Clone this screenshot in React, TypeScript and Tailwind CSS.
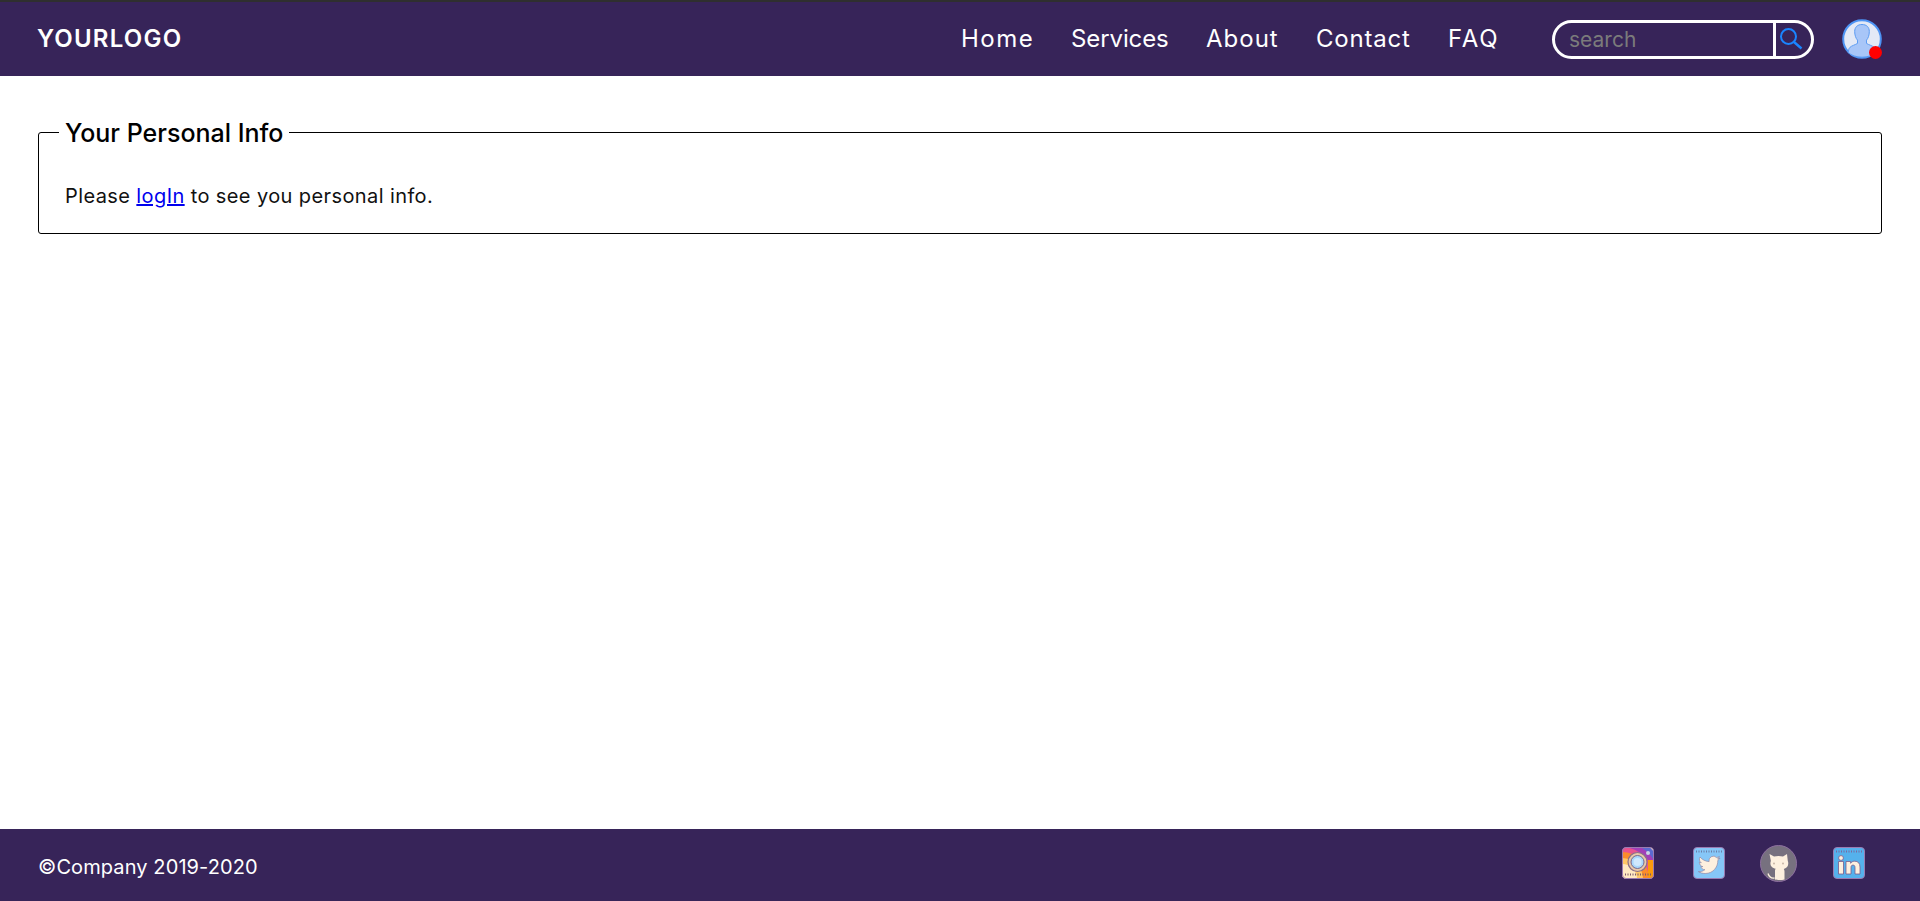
import React from 'react';

const font = 'font-["Inter","Open_Sans",sans-serif]';

const navLinks = [
  { label: 'Home', cls: 'w-[74px] tracking-[1.5px]' },
  { label: 'Services', cls: 'w-[99px] tracking-[-0.1px]' },
  { label: 'About', cls: 'w-[74px] tracking-[1px]' },
  { label: 'Contact', cls: 'w-[96px] tracking-[0.8px]' },
  { label: 'FAQ', cls: 'w-[52px] tracking-[1.8px]' },
];

const Avatar = () => (
  <div className="relative w-[40px] h-[40px]">
    <svg viewBox="0 0 40 40" className="w-[40px] h-[40px]">
      <circle cx="20" cy="20" r="18.800" fill="#e3e9f6" stroke="#4d94f5" strokeWidth="2" />
      <path
        d="M20 5.500c-4.700 0-7.300 2.800-7.300 7 0 3.500 1 6.700 2.800 8.600v3.300c-2.300 1.500-6 2.300-7.700 4.100-1 1.100-1.500 2.800-1.600 5 3 2.900 8.100 4.700 13.800 4.700s10.800-1.800 13.800-4.700c-.1-2.200-.6-3.900-1.600-5-1.700-1.800-5.400-2.600-7.700-4.100v-3.300c1.800-1.900 2.800-5.100 2.800-8.600 0-4.200-2.600-7-7.300-7z"
        fill="#a8c6f8"
        stroke="#5b9bf3"
        strokeWidth="1"
      />
    </svg>
    <span className="absolute right-0 bottom-0 w-[13px] h-[13px] rounded-full bg-[#ff0000]" />
  </div>
);

const Instagram = () => (
  <svg viewBox="0 0 32 32" className="w-[32px] h-[32px]">
    <defs>
      <clipPath id="ig">
        <rect x="0.500" y="0.500" width="31" height="31" rx="3.500" />
      </clipPath>
    </defs>
    <g clipPath="url(#ig)">
      <rect width="32" height="32" fill="#ffe9c2" />
      <circle cx="0" cy="32" r="42" fill="#5b6ad0" />
      <circle cx="0" cy="32" r="37" fill="#a23fb8" />
      <circle cx="0" cy="32" r="32" fill="#e8528f" />
      <circle cx="0" cy="32" r="27" fill="#fb8c2b" />
      <circle cx="0" cy="32" r="21" fill="#ffc766" />
      <circle cx="0" cy="32" r="15" fill="#ffe9c2" />
      <rect x="26" y="13" width="6" height="19" fill="#fb9a0c" />
    </g>
    <rect x="0.500" y="0.500" width="31" height="31" rx="3.500" fill="none" stroke="#9a7bb0" />
    <circle cx="15.500" cy="15" r="9.500" fill="#e9c9a8" stroke="#8a6f8a" strokeWidth="1.200" />
    <circle cx="15.500" cy="15" r="6.500" fill="#a9d7fb" stroke="#77688f" strokeWidth="1" />
    <circle cx="15.500" cy="15" r="4" fill="#cfe8fd" />
    <circle cx="26" cy="6" r="2" fill="#c9d4e6" />
    <path d="M3 27.500h26" stroke="#7a5a6c" strokeWidth="2" strokeDasharray="1 1.500" />
  </svg>
);

const Twitter = () => (
  <svg viewBox="0 0 32 32" className="w-[32px] h-[32px]">
    <rect x="0.500" y="0.500" width="31" height="31" rx="3.500" fill="#86c7f7" stroke="#9a7bb0" />
    <path d="M3 4.500h26" stroke="#6a7fa8" strokeWidth="2" strokeDasharray="1 1.500" />
    <path
      d="M27 11.200c-.8.400-1.700.6-2.500.7.900-.6 1.600-1.400 1.900-2.400-.8.500-1.800.9-2.800 1.100a4.400 4.400 0 0 0-7.500 4c-3.700-.2-7-2-9.100-4.600-1.200 2-.6 4.500 1.300 5.800-.7 0-1.400-.2-2-.5 0 2.100 1.500 3.900 3.500 4.300-.6.200-1.300.2-2 .1.600 1.700 2.200 3 4.100 3-1.900 1.500-4.200 2.100-6.500 1.900 2 1.200 4.200 1.900 6.800 1.900 8.200 0 12.900-6.900 12.600-13.100.9-.6 1.600-1.300 2.200-2.200z"
      fill="#fdf0df"
      stroke="#8a7a9a"
      strokeWidth="0.600"
    />
  </svg>
);

const Github = () => (
  <svg viewBox="0 0 37 37" className="w-[37px] h-[37px]">
    <circle cx="18.500" cy="18.500" r="18" fill="#77717f" stroke="#8d6f9f" strokeWidth="1" />
    <path
      d="M9.500 9l4.500 2.500c1.400-.4 2.800-.6 4.500-.6s3.100.2 4.500.6L27 9l.8 7c.8 1.500.6 4.500-1 6.200-.8.9-2 1.500-3 1.800.5.800.7 1.500.7 2.500v8c-1.500.4-3.200.6-5 .6s-3-.2-4.500-.5V26c0-1 .2-1.500.7-2.200-1.500-.3-3-1-4-2-1.500-1.700-1.600-4.300-.8-5.800z"
      fill="#fdf0df"
    />
    <path d="M14.500 33c-3 .5-5.500-1.500-6.500-4.500" fill="none" stroke="#fdf0df" strokeWidth="1.300" />
    <circle cx="14" cy="18.500" r="1" fill="#c9b6a8" />
    <circle cx="23" cy="18.500" r="1" fill="#c9b6a8" />
  </svg>
);

const Linkedin = () => (
  <svg viewBox="0 0 32 32" className="w-[32px] h-[32px]">
    <rect x="0.500" y="0.500" width="31" height="31" rx="3.500" fill="#55b1ec" stroke="#9a7bb0" />
    <path d="M3 4.500h26" stroke="#7a6aa0" strokeWidth="2" strokeDasharray="1 1.500" />
    <circle cx="8" cy="11" r="2.400" fill="#fdf0df" stroke="#7a5a8c" strokeWidth="0.800" />
    <path
      d="M5.500 14.500h5V27h-5zM13 14.500h4.600v1.800c.8-1.300 2.200-2.100 4-2.100 3.400 0 5.400 2 5.400 5.800V27h-5v-6.400c0-1.700-.7-2.500-2-2.500s-2 .8-2 2.500V27h-5z"
      fill="#fdf0df"
      stroke="#7a5a8c"
      strokeWidth="0.800"
    />
  </svg>
);

const App: React.FC = () => {
  return (
    <div className={`${font} min-h-[901px] flex flex-col bg-white`}>
      {/* header */}
      <header className="h-[76px] bg-[#372459] border-t-2 border-[#2f2f2f] flex items-center pl-[37px] pr-[38px]">
        <a className="text-[24px] leading-none font-semibold text-white tracking-[1.2px]">YOURLOGO</a>
        <nav className="ml-auto flex items-center gap-[36px] text-[24px] text-white">
          {navLinks.map((l) => (
            <a key={l.label} className={`${l.cls} whitespace-nowrap`}>
              {l.label}
            </a>
          ))}
        </nav>
        <div className="ml-[52px] w-[262px] h-[39px] border-[3px] border-white rounded-[20px] flex items-center">
          <input
            placeholder="search"
            className="w-[221px] h-full pl-[14px] bg-transparent text-[21px] text-white outline-none placeholder:text-[#7b7b7b] border-r-[3px] border-white"
          />
          <svg viewBox="0 0 24 24" className="w-[24px] h-[24px] ml-[3px] text-[#1a85ff]" fill="none" stroke="currentColor">
            <circle cx="9.500" cy="9.500" r="7.500" strokeWidth="2" />
            <path d="M15 15l7.500 6.500" strokeWidth="2.400" />
          </svg>
        </div>
        <div className="ml-[28px]">
          <Avatar />
        </div>
      </header>

      {/* content */}
      <main className="flex-1 px-[38px] pt-[40px]">
        <fieldset className="border border-black rounded-[3px] px-[26px] pt-[35px] h-[118px] min-w-0">
          <legend className="ml-[-6px] px-[6px] pt-[2px] text-[25px] leading-[31px] font-medium text-black">Your Personal Info</legend>
          <p className="text-[20px] leading-[24px] text-[#111] tracking-[0.4px]">
            Please{' '}
            <a href="#" className="text-[#0000ee] underline">
              logIn
            </a>{' '}
            to see you personal info.
          </p>
        </fieldset>
      </main>

      {/* footer */}
      <footer className="h-[72px] bg-[#372459] flex items-center pl-[38px] pr-[55px]">
        <span className="text-[20px] text-white tracking-[0.1px] mt-[4px]">©Company 2019-2020</span>
        <div className="ml-auto flex items-center mt-[-4px]">
          <Instagram />
          <div className="ml-[39px]">
            <Twitter />
          </div>
          <div className="ml-[35px]">
            <Github />
          </div>
          <div className="ml-[36px]">
            <Linkedin />
          </div>
        </div>
      </footer>
    </div>
  );
};

export default App;
